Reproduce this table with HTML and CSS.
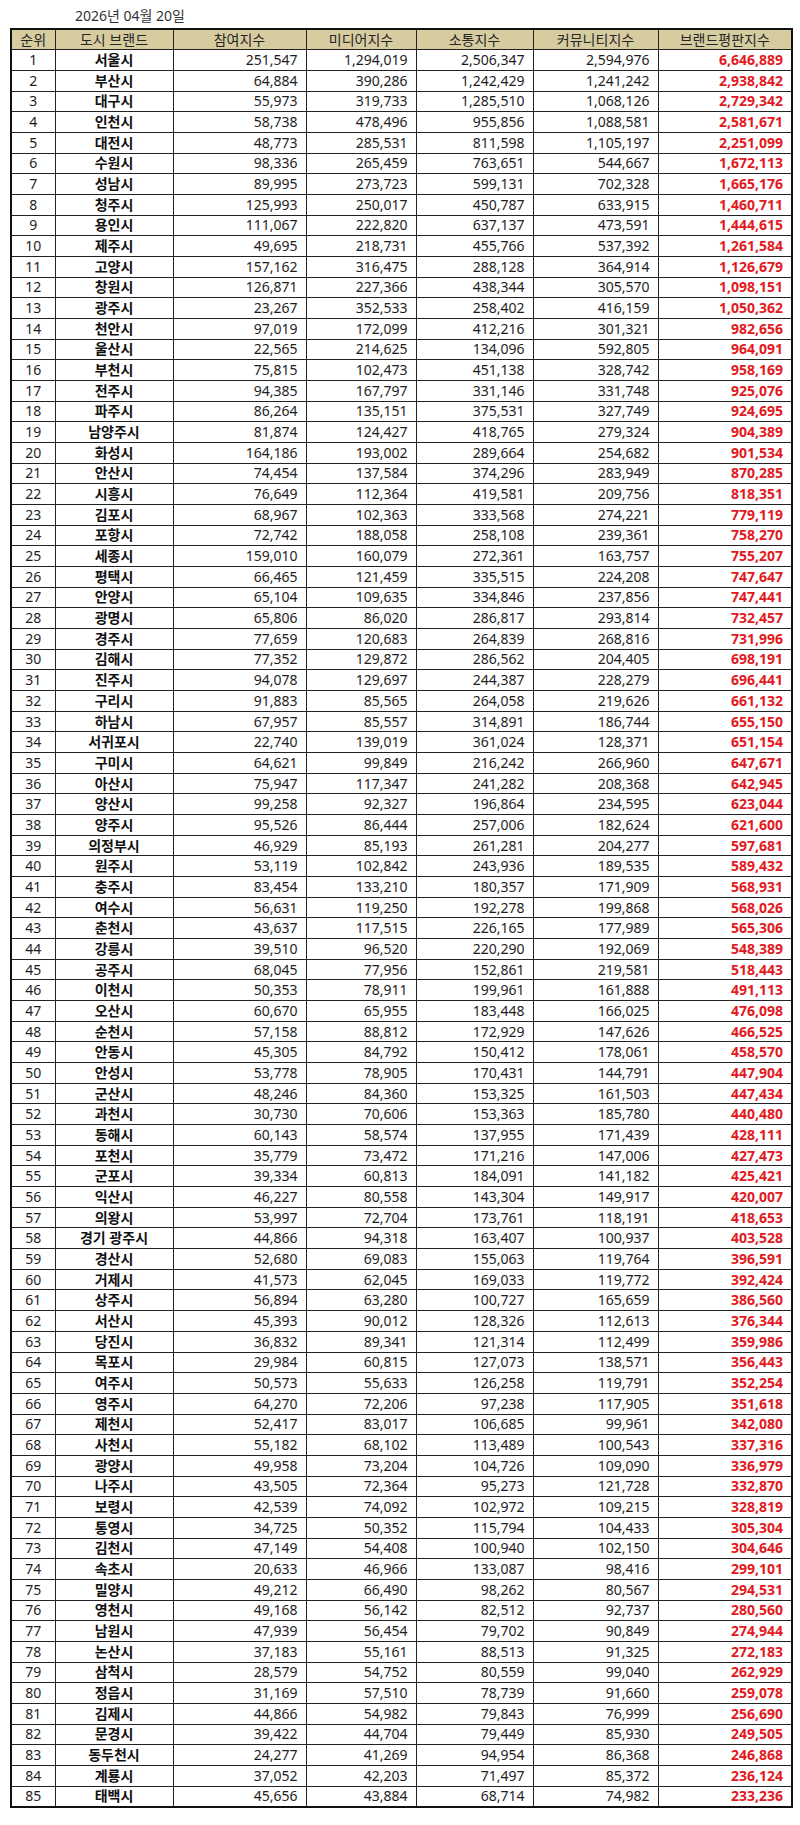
FILE: index.html
```html
<!DOCTYPE html>
<html lang="ko">
<head>
<meta charset="utf-8">
<title>도시 브랜드평판지수</title>
<link rel="stylesheet" href="styles.css">
</head>
<body>
<div class="date">2026년 04월 20일</div>
<table class="rank">
<colgroup>
<col class="c-rank"><col class="c-city"><col class="c-a"><col class="c-b"><col class="c-c"><col class="c-d"><col class="c-e">
</colgroup>
<thead>
<tr><th>순위</th><th>도시 브랜드</th><th>참여지수</th><th>미디어지수</th><th>소통지수</th><th>커뮤니티지수</th><th>브랜드평판지수</th></tr>
</thead>
<tbody>
<tr><td>1</td><td>서울시</td><td>251,547</td><td>1,294,019</td><td>2,506,347</td><td>2,594,976</td><td>6,646,889</td></tr>
<tr><td>2</td><td>부산시</td><td>64,884</td><td>390,286</td><td>1,242,429</td><td>1,241,242</td><td>2,938,842</td></tr>
<tr><td>3</td><td>대구시</td><td>55,973</td><td>319,733</td><td>1,285,510</td><td>1,068,126</td><td>2,729,342</td></tr>
<tr><td>4</td><td>인천시</td><td>58,738</td><td>478,496</td><td>955,856</td><td>1,088,581</td><td>2,581,671</td></tr>
<tr><td>5</td><td>대전시</td><td>48,773</td><td>285,531</td><td>811,598</td><td>1,105,197</td><td>2,251,099</td></tr>
<tr><td>6</td><td>수원시</td><td>98,336</td><td>265,459</td><td>763,651</td><td>544,667</td><td>1,672,113</td></tr>
<tr><td>7</td><td>성남시</td><td>89,995</td><td>273,723</td><td>599,131</td><td>702,328</td><td>1,665,176</td></tr>
<tr><td>8</td><td>청주시</td><td>125,993</td><td>250,017</td><td>450,787</td><td>633,915</td><td>1,460,711</td></tr>
<tr><td>9</td><td>용인시</td><td>111,067</td><td>222,820</td><td>637,137</td><td>473,591</td><td>1,444,615</td></tr>
<tr><td>10</td><td>제주시</td><td>49,695</td><td>218,731</td><td>455,766</td><td>537,392</td><td>1,261,584</td></tr>
<tr><td>11</td><td>고양시</td><td>157,162</td><td>316,475</td><td>288,128</td><td>364,914</td><td>1,126,679</td></tr>
<tr><td>12</td><td>창원시</td><td>126,871</td><td>227,366</td><td>438,344</td><td>305,570</td><td>1,098,151</td></tr>
<tr><td>13</td><td>광주시</td><td>23,267</td><td>352,533</td><td>258,402</td><td>416,159</td><td>1,050,362</td></tr>
<tr><td>14</td><td>천안시</td><td>97,019</td><td>172,099</td><td>412,216</td><td>301,321</td><td>982,656</td></tr>
<tr><td>15</td><td>울산시</td><td>22,565</td><td>214,625</td><td>134,096</td><td>592,805</td><td>964,091</td></tr>
<tr><td>16</td><td>부천시</td><td>75,815</td><td>102,473</td><td>451,138</td><td>328,742</td><td>958,169</td></tr>
<tr><td>17</td><td>전주시</td><td>94,385</td><td>167,797</td><td>331,146</td><td>331,748</td><td>925,076</td></tr>
<tr><td>18</td><td>파주시</td><td>86,264</td><td>135,151</td><td>375,531</td><td>327,749</td><td>924,695</td></tr>
<tr><td>19</td><td>남양주시</td><td>81,874</td><td>124,427</td><td>418,765</td><td>279,324</td><td>904,389</td></tr>
<tr><td>20</td><td>화성시</td><td>164,186</td><td>193,002</td><td>289,664</td><td>254,682</td><td>901,534</td></tr>
<tr><td>21</td><td>안산시</td><td>74,454</td><td>137,584</td><td>374,296</td><td>283,949</td><td>870,285</td></tr>
<tr><td>22</td><td>시흥시</td><td>76,649</td><td>112,364</td><td>419,581</td><td>209,756</td><td>818,351</td></tr>
<tr><td>23</td><td>김포시</td><td>68,967</td><td>102,363</td><td>333,568</td><td>274,221</td><td>779,119</td></tr>
<tr><td>24</td><td>포항시</td><td>72,742</td><td>188,058</td><td>258,108</td><td>239,361</td><td>758,270</td></tr>
<tr><td>25</td><td>세종시</td><td>159,010</td><td>160,079</td><td>272,361</td><td>163,757</td><td>755,207</td></tr>
<tr><td>26</td><td>평택시</td><td>66,465</td><td>121,459</td><td>335,515</td><td>224,208</td><td>747,647</td></tr>
<tr><td>27</td><td>안양시</td><td>65,104</td><td>109,635</td><td>334,846</td><td>237,856</td><td>747,441</td></tr>
<tr><td>28</td><td>광명시</td><td>65,806</td><td>86,020</td><td>286,817</td><td>293,814</td><td>732,457</td></tr>
<tr><td>29</td><td>경주시</td><td>77,659</td><td>120,683</td><td>264,839</td><td>268,816</td><td>731,996</td></tr>
<tr><td>30</td><td>김해시</td><td>77,352</td><td>129,872</td><td>286,562</td><td>204,405</td><td>698,191</td></tr>
<tr><td>31</td><td>진주시</td><td>94,078</td><td>129,697</td><td>244,387</td><td>228,279</td><td>696,441</td></tr>
<tr><td>32</td><td>구리시</td><td>91,883</td><td>85,565</td><td>264,058</td><td>219,626</td><td>661,132</td></tr>
<tr><td>33</td><td>하남시</td><td>67,957</td><td>85,557</td><td>314,891</td><td>186,744</td><td>655,150</td></tr>
<tr><td>34</td><td>서귀포시</td><td>22,740</td><td>139,019</td><td>361,024</td><td>128,371</td><td>651,154</td></tr>
<tr><td>35</td><td>구미시</td><td>64,621</td><td>99,849</td><td>216,242</td><td>266,960</td><td>647,671</td></tr>
<tr><td>36</td><td>아산시</td><td>75,947</td><td>117,347</td><td>241,282</td><td>208,368</td><td>642,945</td></tr>
<tr><td>37</td><td>양산시</td><td>99,258</td><td>92,327</td><td>196,864</td><td>234,595</td><td>623,044</td></tr>
<tr><td>38</td><td>양주시</td><td>95,526</td><td>86,444</td><td>257,006</td><td>182,624</td><td>621,600</td></tr>
<tr><td>39</td><td>의정부시</td><td>46,929</td><td>85,193</td><td>261,281</td><td>204,277</td><td>597,681</td></tr>
<tr><td>40</td><td>원주시</td><td>53,119</td><td>102,842</td><td>243,936</td><td>189,535</td><td>589,432</td></tr>
<tr><td>41</td><td>충주시</td><td>83,454</td><td>133,210</td><td>180,357</td><td>171,909</td><td>568,931</td></tr>
<tr><td>42</td><td>여수시</td><td>56,631</td><td>119,250</td><td>192,278</td><td>199,868</td><td>568,026</td></tr>
<tr><td>43</td><td>춘천시</td><td>43,637</td><td>117,515</td><td>226,165</td><td>177,989</td><td>565,306</td></tr>
<tr><td>44</td><td>강릉시</td><td>39,510</td><td>96,520</td><td>220,290</td><td>192,069</td><td>548,389</td></tr>
<tr><td>45</td><td>공주시</td><td>68,045</td><td>77,956</td><td>152,861</td><td>219,581</td><td>518,443</td></tr>
<tr><td>46</td><td>이천시</td><td>50,353</td><td>78,911</td><td>199,961</td><td>161,888</td><td>491,113</td></tr>
<tr><td>47</td><td>오산시</td><td>60,670</td><td>65,955</td><td>183,448</td><td>166,025</td><td>476,098</td></tr>
<tr><td>48</td><td>순천시</td><td>57,158</td><td>88,812</td><td>172,929</td><td>147,626</td><td>466,525</td></tr>
<tr><td>49</td><td>안동시</td><td>45,305</td><td>84,792</td><td>150,412</td><td>178,061</td><td>458,570</td></tr>
<tr><td>50</td><td>안성시</td><td>53,778</td><td>78,905</td><td>170,431</td><td>144,791</td><td>447,904</td></tr>
<tr><td>51</td><td>군산시</td><td>48,246</td><td>84,360</td><td>153,325</td><td>161,503</td><td>447,434</td></tr>
<tr><td>52</td><td>과천시</td><td>30,730</td><td>70,606</td><td>153,363</td><td>185,780</td><td>440,480</td></tr>
<tr><td>53</td><td>동해시</td><td>60,143</td><td>58,574</td><td>137,955</td><td>171,439</td><td>428,111</td></tr>
<tr><td>54</td><td>포천시</td><td>35,779</td><td>73,472</td><td>171,216</td><td>147,006</td><td>427,473</td></tr>
<tr><td>55</td><td>군포시</td><td>39,334</td><td>60,813</td><td>184,091</td><td>141,182</td><td>425,421</td></tr>
<tr><td>56</td><td>익산시</td><td>46,227</td><td>80,558</td><td>143,304</td><td>149,917</td><td>420,007</td></tr>
<tr><td>57</td><td>의왕시</td><td>53,997</td><td>72,704</td><td>173,761</td><td>118,191</td><td>418,653</td></tr>
<tr><td>58</td><td>경기 광주시</td><td>44,866</td><td>94,318</td><td>163,407</td><td>100,937</td><td>403,528</td></tr>
<tr><td>59</td><td>경산시</td><td>52,680</td><td>69,083</td><td>155,063</td><td>119,764</td><td>396,591</td></tr>
<tr><td>60</td><td>거제시</td><td>41,573</td><td>62,045</td><td>169,033</td><td>119,772</td><td>392,424</td></tr>
<tr><td>61</td><td>상주시</td><td>56,894</td><td>63,280</td><td>100,727</td><td>165,659</td><td>386,560</td></tr>
<tr><td>62</td><td>서산시</td><td>45,393</td><td>90,012</td><td>128,326</td><td>112,613</td><td>376,344</td></tr>
<tr><td>63</td><td>당진시</td><td>36,832</td><td>89,341</td><td>121,314</td><td>112,499</td><td>359,986</td></tr>
<tr><td>64</td><td>목포시</td><td>29,984</td><td>60,815</td><td>127,073</td><td>138,571</td><td>356,443</td></tr>
<tr><td>65</td><td>여주시</td><td>50,573</td><td>55,633</td><td>126,258</td><td>119,791</td><td>352,254</td></tr>
<tr><td>66</td><td>영주시</td><td>64,270</td><td>72,206</td><td>97,238</td><td>117,905</td><td>351,618</td></tr>
<tr><td>67</td><td>제천시</td><td>52,417</td><td>83,017</td><td>106,685</td><td>99,961</td><td>342,080</td></tr>
<tr><td>68</td><td>사천시</td><td>55,182</td><td>68,102</td><td>113,489</td><td>100,543</td><td>337,316</td></tr>
<tr><td>69</td><td>광양시</td><td>49,958</td><td>73,204</td><td>104,726</td><td>109,090</td><td>336,979</td></tr>
<tr><td>70</td><td>나주시</td><td>43,505</td><td>72,364</td><td>95,273</td><td>121,728</td><td>332,870</td></tr>
<tr><td>71</td><td>보령시</td><td>42,539</td><td>74,092</td><td>102,972</td><td>109,215</td><td>328,819</td></tr>
<tr><td>72</td><td>통영시</td><td>34,725</td><td>50,352</td><td>115,794</td><td>104,433</td><td>305,304</td></tr>
<tr><td>73</td><td>김천시</td><td>47,149</td><td>54,408</td><td>100,940</td><td>102,150</td><td>304,646</td></tr>
<tr><td>74</td><td>속초시</td><td>20,633</td><td>46,966</td><td>133,087</td><td>98,416</td><td>299,101</td></tr>
<tr><td>75</td><td>밀양시</td><td>49,212</td><td>66,490</td><td>98,262</td><td>80,567</td><td>294,531</td></tr>
<tr><td>76</td><td>영천시</td><td>49,168</td><td>56,142</td><td>82,512</td><td>92,737</td><td>280,560</td></tr>
<tr><td>77</td><td>남원시</td><td>47,939</td><td>56,454</td><td>79,702</td><td>90,849</td><td>274,944</td></tr>
<tr><td>78</td><td>논산시</td><td>37,183</td><td>55,161</td><td>88,513</td><td>91,325</td><td>272,183</td></tr>
<tr><td>79</td><td>삼척시</td><td>28,579</td><td>54,752</td><td>80,559</td><td>99,040</td><td>262,929</td></tr>
<tr><td>80</td><td>정읍시</td><td>31,169</td><td>57,510</td><td>78,739</td><td>91,660</td><td>259,078</td></tr>
<tr><td>81</td><td>김제시</td><td>44,866</td><td>54,982</td><td>79,843</td><td>76,999</td><td>256,690</td></tr>
<tr><td>82</td><td>문경시</td><td>39,422</td><td>44,704</td><td>79,449</td><td>85,930</td><td>249,505</td></tr>
<tr><td>83</td><td>동두천시</td><td>24,277</td><td>41,269</td><td>94,954</td><td>86,368</td><td>246,868</td></tr>
<tr><td>84</td><td>계룡시</td><td>37,052</td><td>42,203</td><td>71,497</td><td>85,372</td><td>236,124</td></tr>
<tr><td>85</td><td>태백시</td><td>45,656</td><td>43,884</td><td>68,714</td><td>74,982</td><td>233,236</td></tr>
</tbody>
</table>
</body>
</html>
```

FILE: styles.css
```css
html, body {
  margin: 0;
  padding: 0;
  background: #ffffff;
}

body {
  font-family: "Noto Sans", "Noto Sans CJK KR", sans-serif;
  font-size: 14px;
  color: #1e1e1e;
  width: 800px;
}

.date {
  height: 28px;
  box-sizing: border-box;
  padding: 6px 0 0 75px;
  line-height: 20px;
  font-size: 14px;
  color: #333333;
}

.rank {
  margin-left: 10px;
  width: 781px;
  table-layout: fixed;
  border-collapse: collapse;
  border: 2px solid #111111;
}

.c-rank { width: 44px; }
.c-city { width: 118px; }
.c-a { width: 133px; }
.c-b { width: 110px; }
.c-c { width: 117px; }
.c-d { width: 125px; }
.c-e { width: 134px; }

.rank tr {
  height: 20.68px;
}

.rank th,
.rank td {
  border: 1px solid #222222;
  padding: 0 8px;
  line-height: 18px;
  white-space: nowrap;
  overflow: hidden;
}

.rank th {
  background: #d6cca0;
  font-weight: 400;
  color: #262626;
  text-align: center;
}

.rank td {
  text-align: right;
}

.rank td:nth-child(1) {
  text-align: center;
  padding: 0;
}

.rank td:nth-child(2) {
  text-align: center;
  font-weight: 700;
  color: #111111;
}

.rank td:nth-child(7) {
  font-weight: 700;
  color: #e3191e;
}
```
